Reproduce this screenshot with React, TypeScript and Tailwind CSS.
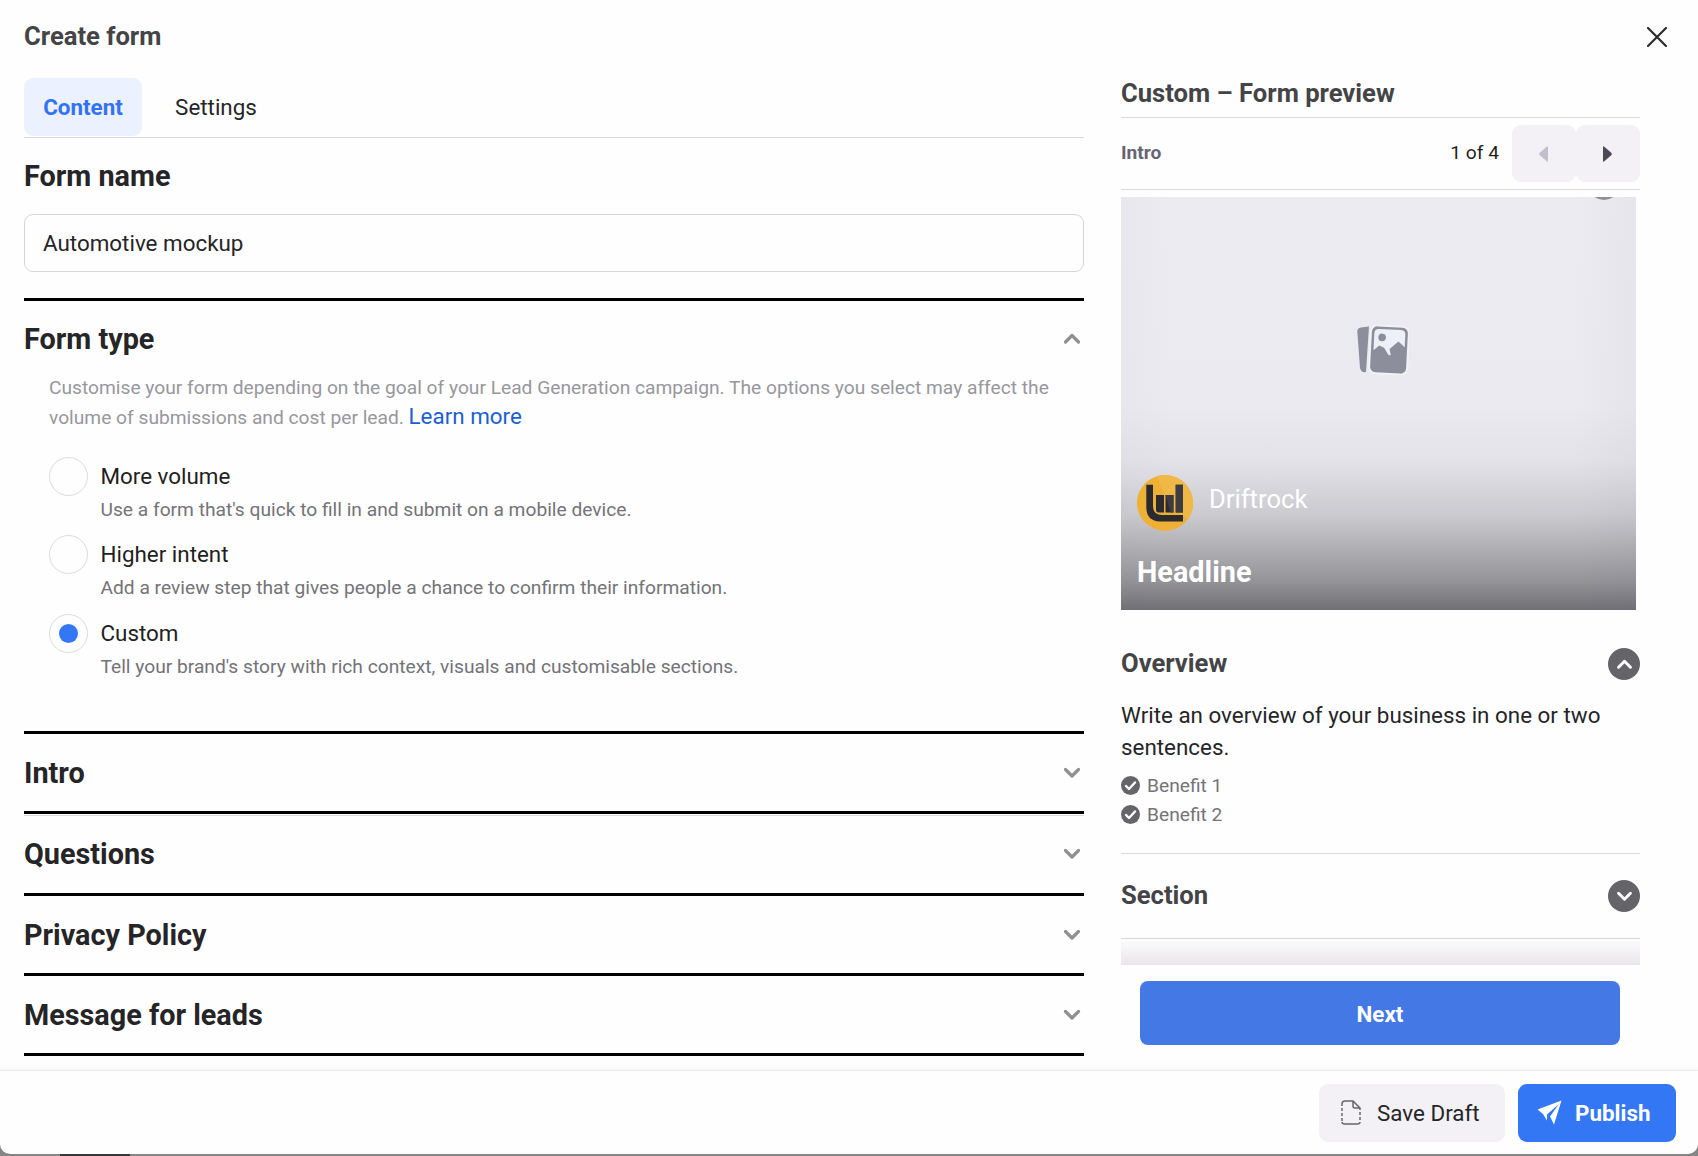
import { ReactNode, useState } from "react";

const formTypes = [
  {
    title: "More volume",
    description: "Use a form that's quick to fill in and submit on a mobile device.",
  },
  {
    title: "Higher intent",
    description: "Add a review step that gives people a chance to confirm their information.",
  },
  {
    title: "Custom",
    description: "Tell your brand's story with rich context, visuals and customisable sections.",
  },
];

const Chevron = ({ up, className }: { up?: boolean; className?: string }) => (
  <svg viewBox="0 0 18 12" className={className} fill="none" stroke="currentColor" strokeWidth="3.2" strokeLinecap="round" strokeLinejoin="round">
    <path d={up ? "M2.5 9 9 2.500l6.500 6.500" : "M2.500 2.500 9 9l6.500-6.500"} />
  </svg>
);

const SectionHeader = ({ title, open, className }: { title: string; open?: boolean; className: string }) => (
  <button className={`flex w-full items-center justify-between border-t-[3px] border-black pr-[3px] text-left ${className}`}>
    <span className="text-[28.8px] leading-8 font-bold text-[#252528]">{title}</span>
    <Chevron up={open} className="h-3 w-[18px] text-[#8f8f96]" />
  </button>
);

const FormTypeOptions = () => {
  const [selected, setSelected] = useState("Custom");
  return (
    <div className="mt-[25px] flex flex-col">
      {formTypes.map((item) => {
        return (
          <div key={item.title} className="flex h-[78.4px] gap-[12.5px]" onClick={() => setSelected(item.title)}>
            <div className="flex size-[39px] shrink-0 items-center justify-center rounded-full border border-[#dcdae0]">
              {selected == item.title && <div className="size-[19px] rounded-full bg-[#3477f5]"></div>}
            </div>
            <div>
              <p className="h-[39px] text-[22.4px] leading-[38px] text-[#1f1f22]">{item.title}</p>
              <p className="text-[19.2px] leading-[27px] text-[#737378]">{item.description}</p>
            </div>
          </div>
        );
      })}
    </div>
  );
};

const RoundToggle = ({ up }: { up?: boolean }) => (
  <div className="flex size-8 items-center justify-center rounded-full bg-[#656469] text-white">
    <Chevron up={up} className="h-[11px] w-[17px]" />
  </div>
);

const Benefit = ({ children }: { children: ReactNode }) => (
  <li className="flex h-[29px] items-center gap-[7px] text-[19.2px] text-[#737378]">
    <svg viewBox="0 0 19 19" className="size-[19px]">
      <circle cx="9.500" cy="9.500" r="9.500" fill="#656469" />
      <path d="m5 10 3 3 6-6.500" fill="none" stroke="#fff" strokeWidth="2.400" strokeLinecap="round" strokeLinejoin="round" />
    </svg>
    <span className="pt-px">{children}</span>
  </li>
);

const PhotosIcon = () => (
  <svg viewBox="0 0 52 50" className="ml-2 h-[50px] w-[52px]">
    <path d="M4 2.500 12 1.500 9 47q-5 1-6-4L.3 7Q0 3 4 2.500Z" fill="#8c8f9b" />
    <g transform="rotate(3 32 25)">
      <rect x="13" y="1" width="38" height="48" rx="6.500" fill="#8c8f9b" stroke="#f1f2f8" strokeWidth="2" />
      <path d="M16.500 9q0-4.500 4.500-4.500h22q4.500 0 4.500 4.500v12.500l-6.500-5.500-8.500 8 1.500 6q-2 1-3-1l-4-6-5-2-5.500 5Z" fill="#edf0f9" />
      <circle cx="24.500" cy="12.800" r="3.800" fill="#8c8f9b" />
    </g>
  </svg>
);

const BrandLogo = () => (
  <svg viewBox="0 0 56 56" className="size-14">
    <circle cx="28" cy="28" r="28" fill="#eeb035" />
    <path d="M20 1.200a28 28 0 0 1 36 26.800q0 10-5 16L32 32Z" fill="#f0b846" />
    <path d="M9.300 9.700H16V31q0 9 9 9h21v6.500H23Q9.300 46 9.300 32Z" fill="#2b2a31" />
    <path d="M19 20h8v17.500h-5.500q-2.500 0-2.500-3ZM28.500 20h8v17.500h-8ZM38.700 9.700H46v27.800h-7.300Z" fill="#2b2a31" />
    <path d="M38.700 9.700H46v27.800h-7.300ZM28.500 20h8v17.500h-3Z" fill="#3d3c43" />
  </svg>
);

const FormPreview = () => (
  <aside className="w-[519px] pt-[78px]">
    <h2 className="h-10 border-b border-[#d8d8da] text-[25.6px] leading-[31px] font-bold text-[#444447]">Custom – Form preview</h2>
    <div className="flex h-[72px] items-center border-b border-[#d8d8da]">
      <span className="flex-1 text-[19.2px] font-bold text-[#65656f]">Intro</span>
      <span className="mr-[13px] text-[19.2px] text-[#1f1f22]">1 of 4</span>
      <button className="flex h-[57px] w-16 items-center justify-center rounded-[9px] bg-[#f3f1f5] pr-[2px]">
        <svg viewBox="0 0 9 16" className="h-4 w-[9px]"><path d="M9 1v14q0 1-1 .5L.5 9Q0 8 .5 7L8 .5Q9 0 9 1Z" fill="#c0c0ca" /></svg>
      </button>
      <button className="flex h-[57px] w-16 items-center justify-center rounded-[9px] bg-[#f3f1f5] pr-px">
        <svg viewBox="0 0 9 16" className="h-4 w-[9px]"><path d="M0 1v14q0 1 1 .5L8.500 9Q9 8 8.500 7L1 .5Q0 0 0 1Z" fill="#4a4a55" /></svg>
      </button>
    </div>

    {/* Cover image placeholder */}
    <div className="relative mt-[7px] flex h-[413px] w-[515px] flex-col overflow-hidden bg-[linear-gradient(90deg,rgba(60,60,90,0.02),transparent_10%,transparent_88%,rgba(60,60,90,0.03)),linear-gradient(180deg,#ecebf1_0%,#ebeaf0_50%,#e3e2e8_64%,#cbcacf_77%,#b0afb3_85%,#949398_93%,#717075_100%)] px-4">
      <div className="absolute top-[-29px] right-4 size-8 rounded-full bg-[#8f8f94]"></div>
      <div className="flex h-[278px] items-center justify-center pt-[27px]">
        <PhotosIcon />
      </div>
      <div className="flex items-center gap-4">
        <BrandLogo />
        <span className="pb-2 text-[25.6px] leading-8 text-white">Driftrock</span>
      </div>
      <h3 className="mt-[25px] text-[28.8px] leading-8 font-bold text-white">Headline</h3>
    </div>

    <div className="mt-[38px] flex h-8 items-center justify-between">
      <h3 className="pb-[2px] text-[25.6px] font-bold text-[#444447]">Overview</h3>
      <RoundToggle up />
    </div>
    <p className="mt-[19px] text-[22.4px] leading-8 text-[#252528]">Write an overview of your business in one or two sentences.</p>
    <ul className="mt-2">
      <Benefit>Benefit 1</Benefit>
      <Benefit>Benefit 2</Benefit>
    </ul>
    <div className="mt-6 flex h-[86px] items-center justify-between border-y border-[#d8d8da]">
      <h3 className="pb-[2px] text-[25.6px] font-bold text-[#444447]">Section</h3>
      <RoundToggle />
    </div>
    <div className="h-[26px] bg-linear-to-b from-[#fdfcfe] to-[#e8e6ea]"></div>
    <button className="mt-4 ml-[19px] h-16 w-[480px] rounded-lg bg-[#4478e5] pt-[3px] text-[22.4px] font-bold text-white">Next</button>
  </aside>
);

const App = () => {
  return (
    <div className="h-[1156px] w-[1698px] overflow-hidden bg-[linear-gradient(90deg,#858585_60px,#39393b_60px,#39393b_130px,#858585_130px)] font-[Roboto,sans-serif]">
      <div className="relative flex h-[1154px] flex-col overflow-hidden rounded-b-[10px] bg-[#fefefe]">
        <button className="absolute top-[27px] right-[31px]" aria-label="Close">
          <svg viewBox="0 0 20 20" className="size-5" fill="none" stroke="#2b2b2e" strokeWidth="2.2" strokeLinecap="round">
            <path d="m1 1 18 18M19 1 1 19" />
          </svg>
        </button>
        <div className="flex h-[1070px] gap-[37px] overflow-hidden pl-6">
          <main className="w-[1060px]">
            <h1 className="pt-5 text-[25.6px] leading-8 font-bold text-[#444447]">Create form</h1>
            <nav className="mt-[26px] flex h-[60px] border-b border-[#dadadd] text-[22.4px]">
              <button className="h-[58px] w-[118px] rounded-[9px] bg-[#ebf1ff] pt-[2px] font-bold text-[#3273f6]">Content</button>
              <button className="ml-[15px] h-[58px] w-[118px] pt-[2px] text-[#252528]">Settings</button>
            </nav>
            <h2 className="mt-[22px] text-[28.8px] leading-8 font-bold text-[#252528]">Form name</h2>
            <input
              className="mt-[22px] mb-[26px] block h-[58px] w-full rounded-[9px] border border-[#d6d5d9] px-[18px] text-[22.4px] text-[#252528]"
              defaultValue="Automotive mockup"
            />

            <SectionHeader title="Form type" open className="h-[79px]" />
            <div className="-mt-1 h-[358px] pl-[25px]">
              <p className="text-[19.2px] leading-[29px] text-[#97979d]">
                Customise your form depending on the goal of your Lead Generation campaign. The options you select may affect the
                <br />
                volume of submissions and cost per lead. <a className="text-[22.4px] text-[#1d5fd3]">Learn more</a>
              </p>
              <FormTypeOptions />
            </div>

            <SectionHeader title="Intro" className="h-20" />
            <SectionHeader title="Questions" className="h-[82px] bg-[linear-gradient(180deg,transparent_1px,#dcdcde_1px,#dcdcde_2px,transparent_2px)]" />
            <SectionHeader title="Privacy Policy" className="h-20" />
            <SectionHeader title="Message for leads" className="h-20" />
            <div className="h-[3px] bg-black"></div>
          </main>
          <FormPreview />
        </div>

        <footer className="flex flex-1 items-center justify-end gap-[13px] border-t border-[#eeebf0] pr-[22px] text-[22.4px] shadow-[0_-1px_4px_rgba(0,0,0,0.05)]">
          <button className="flex h-[58px] w-[186px] items-center rounded-[9px] bg-[#f3f1f5] pl-[22px] text-[#252528]">
            <svg viewBox="0 0 20 25" className="mr-4 h-[25px] w-5" fill="none" stroke="#66656b" strokeWidth="1.500">
              <path d="M1 6V4q0-3 3-3h8l7 7v2M12 1v5q0 2 2 2h5M1 8v3m0 2v3m0 2v3m18-9v3m0 2v3M1 22q0 2 3 2h12q3 0 3-2" />
            </svg>
            <span className="pt-[2px]">Save Draft</span>
          </button>
          <button className="flex h-[58px] w-[158px] items-center rounded-[9px] bg-[#3477f5] pl-[19px] font-bold text-white">
            <svg viewBox="0 0 25 25" className="mr-[13px] size-[25px]" fill="currentColor">
              <path d="M24.500.5 17 24.500l-4-8L22 4 10 14.500v6L6 14 .5 9.500Z" />
            </svg>
            <span className="pt-[2px]">Publish</span>
          </button>
        </footer>
      </div>
    </div>
  );
};

export default App;
